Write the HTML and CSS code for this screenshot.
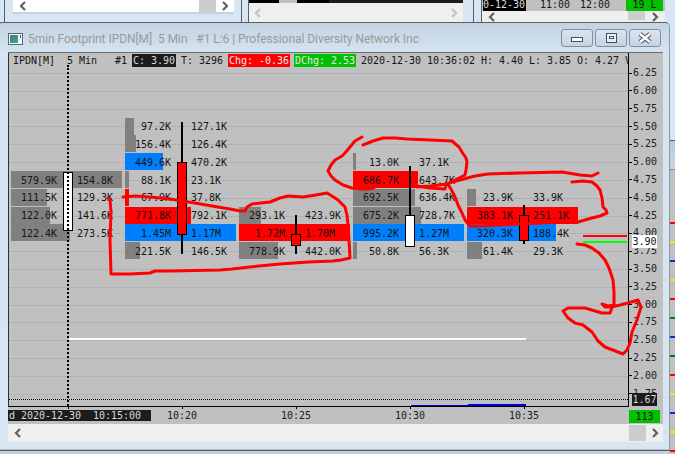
FILE: index.html
```html
<!DOCTYPE html>
<html lang="en">
<head>
<meta charset="utf-8">
<title>5min Footprint IPDN[M]</title>
<link rel="stylesheet" href="styles.css">
</head>
<body>
<div class="desktop">

  <section class="win win-a">
    <div class="hscroll">
      <svg class="chev" viewBox="0 0 10 10"><path d="M7 1 3 5l4 4"/></svg>
      <span class="thumb"></span>
      <svg class="chev" viewBox="0 0 10 10"><path d="M3 1l4 4-4 4"/></svg>
    </div>
  </section>

  <section class="win win-b">
    <div class="clipped-strip"><i class="k1"></i><i class="k2"></i><i class="k3"></i><i class="k4"></i></div>
    <div class="hscroll pale">
      <svg class="chev" viewBox="0 0 10 10"><path d="M7 1 3 5l4 4"/></svg>
      <svg class="chev" viewBox="0 0 10 10"><path d="M3 1l4 4-4 4"/></svg>
    </div>
  </section>

  <section class="win win-c">
    <div class="clock-row">
      <span class="clock-date">0-12-30</span>
      <span class="clock-time">11:00</span>
      <span class="clock-time">12:00</span>
      <span class="clock-count">19 L</span>
    </div>
    <div class="hscroll">
      <svg class="chev" viewBox="0 0 10 10"><path d="M7 1 3 5l4 4"/></svg>
      <span class="thumb"></span>
      <svg class="chev" viewBox="0 0 10 10"><path d="M3 1l4 4-4 4"/></svg>
    </div>
  </section>

  <section class="win win-d">
    <div class="side-title"></div>
    <div class="side-chart">
      <i class="tick-red"></i><i class="tick-yellow"></i><i class="tick-blue"></i><i class="tick-yellow"></i><i class="tick-red"></i><i class="tick-green"></i><i class="tick-blue"></i><i class="tick-green"></i><i class="tick-red"></i><i class="tick-yellow"></i><i class="tick-blue"></i><i class="tick-yellow"></i><i class="tick-red"></i>
    </div>
  </section>

  <div class="win win-e"></div>

  <main class="win win-main">
    <header class="titlebar">
      <svg class="app-icon" viewBox="0 0 15 12">
        <defs><linearGradient id="ig" x1="0" y1="0" x2="1" y2="1"><stop offset="0" stop-color="#3f7f9a"/><stop offset="1" stop-color="#3fa86f"/></linearGradient></defs>
        <rect x=".5" y=".5" width="14" height="11" fill="#f4f6f8" stroke="#5c6670"/>
        <rect x="2" y="2" width="8" height="8" fill="url(#ig)"/>
        <rect x="12" y="2" width="1" height="3" fill="#2050c0"/>
      </svg>
      <span class="title-text">5min Footprint IPDN[M]  5 Min   #1 L:6 | Professional Diversity Network Inc</span>
      <div class="winbtns">
        <button class="winbtn" aria-label="Minimize"><svg viewBox="0 0 30 16"><rect x="9.500" y="7.500" width="11" height="4" fill="#fff" stroke="#44505c"/></svg></button>
        <button class="winbtn" aria-label="Restore"><svg viewBox="0 0 30 16"><rect x="10.500" y="3.500" width="10" height="9" fill="#e8eef4" stroke="#44505c"/><rect x="13.500" y="6.500" width="4" height="2" fill="#fff" stroke="#44505c"/></svg></button>
        <button class="winbtn" aria-label="Close"><svg viewBox="0 0 30 16"><path d="M10 4l10 8M20 4l-10 8" stroke="#44505c" stroke-width="4.600"/><path d="M10 4l10 8M20 4l-10 8" stroke="#fff" stroke-width="2.600"/></svg></button>
      </div>
    </header>

    <div class="chart">
      <div class="plot">
        <div class="grid">
          <i></i><i></i><i></i><i></i><i></i><i></i><i></i><i></i><i></i><i></i><i></i><i></i><i></i><i></i><i></i><i></i><i></i><i></i><i></i>
        </div>

        <div class="fp fp1">
          <div class="row"><b class="bar gray" style="width:111px"></b><span>579.9K</span><span>154.8K</span></div>
          <div class="row"><b class="bar gray" style="width:36px"></b><span>111.5K</span><span>129.3K</span></div>
          <div class="row"><b class="bar gray" style="width:39px"></b><span>122.0K</span><span>141.6K</span></div>
          <div class="row"><b class="bar gray" style="width:59px"></b><span>122.4K</span><span>273.5K</span></div>
        </div>

        <div class="fp fp2">
          <div class="row"><b class="bar gray" style="width:9px"></b><span>97.2K</span><span>127.1K</span></div>
          <div class="row"><b class="bar gray" style="width:11px"></b><span>156.4K</span><span>126.4K</span></div>
          <div class="row"><b class="bar blue" style="width:38px"></b><span>449.6K</span><span>470.2K</span></div>
          <div class="row"><b class="bar gray" style="width:4px"></b><span>88.1K</span><span>23.1K</span></div>
          <div class="row"><b class="bar red" style="width:4px"></b><span>67.9K</span><span>37.8K</span></div>
          <div class="row"><b class="bar red" style="width:66px"></b><span>771.8K</span><span>792.1K</span></div>
          <div class="row"><b class="bar blue" style="width:111px"></b><span>1.45M</span><span>1.17M</span></div>
          <div class="row"><b class="bar gray" style="width:15px"></b><span>221.5K</span><span>146.5K</span></div>
        </div>

        <div class="fp fp3">
          <div class="row"><b class="bar gray" style="width:22px"></b><span>293.1K</span><span>423.9K</span></div>
          <div class="row"><b class="bar red" style="width:111px"></b><span>1.72M</span><span>1.70M</span></div>
          <div class="row"><b class="bar gray" style="width:39px"></b><span>778.9K</span><span>442.0K</span></div>
        </div>

        <div class="fp fp4">
          <div class="row"><b class="bar gray" style="width:3px"></b><span>13.0K</span><span>37.1K</span></div>
          <div class="row"><b class="bar red" style="width:65px"></b><span>686.7K</span><span>643.7K</span></div>
          <div class="row"><b class="bar gray" style="width:62px"></b><span>692.5K</span><span>636.4K</span></div>
          <div class="row"><b class="bar gray" style="width:68px"></b><span>675.2K</span><span>728.7K</span></div>
          <div class="row"><b class="bar blue" style="width:111px"></b><span>995.2K</span><span>1.27M</span></div>
          <div class="row"><b class="bar gray" style="width:4px"></b><span>50.8K</span><span>56.3K</span></div>
        </div>

        <div class="fp fp5">
          <div class="row"><b class="bar gray" style="width:9px"></b><span>23.9K</span><span>33.9K</span></div>
          <div class="row"><b class="bar red" style="width:111px"></b><span>383.1K</span><span>251.1K</span></div>
          <div class="row"><b class="bar blue" style="width:89px"></b><span>320.3K</span><span>188.4K</span></div>
          <div class="row"><b class="bar gray" style="width:15px"></b><span>61.4K</span><span>29.3K</span></div>
        </div>

        <div class="wick w2"></div><div class="wick w3"></div><div class="wick w4"></div><div class="wick w5"></div>
        <div class="body b1 white"></div><div class="body b2 redc"></div><div class="body b3 redc"></div><div class="body b4 white"></div><div class="body b5 redc"></div>
        <div class="cursor"></div>

        <div class="hline white-line"></div>
        <div class="hline last-red"></div>
        <div class="hline last-green"></div>
        <div class="floor-dots"></div>
        <div class="vol vol-thin"></div>
        <div class="vol vol-thick"></div>

        <div class="readout"><span>IPDN[M]  5 Min   #1 </span><span class="r-dark">C: 3.90</span><span> T: 3296 </span><span class="r-red">Chg: -0.36</span><span> </span><span class="r-green">DChg: 2.53</span><span> 2020-12-30 10:36:02 H: 4.40 L: 3.85 O: 4.27 V</span></div>
      </div>

      <div class="axis">
        <div class="price">6.25</div><div class="price">6.00</div><div class="price">5.75</div><div class="price">5.50</div><div class="price">5.25</div><div class="price">5.00</div><div class="price">4.75</div><div class="price">4.50</div><div class="price">4.25</div><div class="price">4.00</div><div class="price">3.75</div><div class="price">3.50</div><div class="price">3.25</div><div class="price">3.00</div><div class="price">2.75</div><div class="price">2.50</div><div class="price">2.25</div><div class="price">2.00</div><div class="price">1.75</div>
        <div class="tag tag-last">3.90</div>
        <div class="tag tag-low">1.67</div>
      </div>

      <div class="timeline">
        <span class="time-start">d 2020-12-30  10:15:00</span>
        <span class="time">10:20</span>
        <span class="time">10:25</span>
        <span class="time">10:30</span>
        <span class="time">10:35</span>
      </div>
      <div class="corner"><span class="count">113</span></div>
    </div>

    <div class="hscroll main-scroll">
      <svg class="chev" viewBox="0 0 10 10"><path d="M7 1 3 5l4 4"/></svg>
      <span class="thumb"></span>
      <svg class="chev" viewBox="0 0 10 10"><path d="M3 1l4 4-4 4"/></svg>
    </div>
  </main>

  <svg class="ink" viewBox="0 0 675 454" aria-hidden="true">
    <path d="M123 197 135 196 150 197 170 199 182 201 195 203 212 206 230 209 240 211 245 211 247 207 252 204 270 202 280 198 288 196 303 197 316 195 327 193 332 196 338 200 345 207 347 215 348 225 349 240 350 258 341 260 333 261 308 262 280 264 250 267 232 269 220 270 170 271 155 271 150 273 130 274 111 274 110 240 111 212 110 200 108 198"/>
    <path d="M362 137 355 141 350 147 345 153 342 156 335 160 331 165 328 171 331 176 335 180 343 185 352 188 360 189 367 189 374 188"/>
    <path d="M363 145 373 141 383 138 395 138 407 139 430 140 452 141 459 147 462 152 466 158 467 162 466 170 465 175 455 180 447 184 430 186 417 187"/>
    <path d="M417 186 430 188 445 189 446 185 452 182 460 180 475 176 488 174 520 173 562 172 580 175 592 176 598 173"/>
    <path d="M572 182 583 181 592 182 597 186 600 190 602 198 603 207 606 210 607 213 600 216 592 218 578 222 560 222 542 223 520 224 498 225 482 226 470 226 465 220 462 213 458 205 455 197 451 189 447 183"/>
    <path d="M577 244 585 245 592 248 599 253 605 260 609 268 613 280 614 292 614 305 608 306 602 304 605 307 611 307 620 305 628 303 638 300 641 307 637 320 632 332 630 343 627 350 623 354 618 352 605 347 598 341 592 332 583 325 575 323 568 318 563 311 568 308 585 308 602 313 610 313 612 308"/>
  </svg>
</div>
</body>
</html>
```

FILE: styles.css
```css
* { box-sizing: border-box; }

html, body { margin: 0; padding: 0; }

body {
  background: #d8e5f2;
  font-family: "DejaVu Sans Mono", monospace;
  font-size: 10px;
  letter-spacing: -0.02px;
  color: #151515;
}

.desktop {
  position: relative;
  width: 675px;
  height: 454px;
  overflow: hidden;
  background: #d8e5f2;
}

.win { position: absolute; }

/* background windows */
.win-a {
  left: 4px; top: -4px; width: 238px; height: 26px;
  padding: 0 8px;
  border-left: 1px solid #5a5f66;
  border-right: 1px solid #5a5f66;
}
.win-a .hscroll { width: 221px; height: 18px; padding-top: 4px; border-bottom: 2px solid #c8d0d8; }
.win-b {
  left: 248px; top: 0; width: 226px; height: 22px;
  border-left: 1px solid #5a5f66;
  border-right: 1px solid #5a5f66;
  padding-right: 10px;
  display: flex; flex-direction: column;
}
.win-c {
  left: 481px; top: 0; width: 194px; height: 22px;
  border-left: 1px solid #5a5f66;
  padding-right: 10px;
  display: flex; flex-direction: column;
}

.clipped-strip { display: flex; height: 3px; background: #c0c0c0; }
.clipped-strip i { display: block; height: 3px; }
.k1 { width: 30px; background: #000; }
.k2 { width: 18px; background: #c0c0c0; }
.k3 { width: 32px; background: #000; }
.k4 { flex: 1; background: #1c1c1c; }

.clock-row {
  display: flex;
  height: 11px;
  line-height: 9px;
  background: #c0c0c0;
  overflow: hidden;
}
.clock-date { width: 43px; margin-left: 1px; background: #000; color: #ddd; white-space: pre; }
.clock-time { width: 30px; margin-left: 14px; }
.clock-time + .clock-time { margin-left: 10px; }
.clock-count {
  width: 37px; margin-left: 16px;
  background: #00c000;
  text-align: center;
}

.win-d {
  left: 670px; top: 140px; width: 5px; height: 314px;
  border-top: 1px solid #5a5f66;
}
.side-title { height: 29px; background: linear-gradient(#b9c9d8, #c8d6e4); border-bottom: 1px solid #808890; }
.side-chart {
  height: 284px;
  padding-top: 52px;
  background: #c0c0c0;
  display: flex; flex-direction: column; gap: 17px;
}
.side-chart i { display: block; height: 2px; width: 5px; }
.tick-red { background: #f00; }
.tick-yellow { background: #ffe600; }
.tick-blue { background: #0030e0; }
.tick-green { background: #008000; }

.win-e {
  left: 0; top: 450px; width: 670px; height: 4px;
  background: #c3d0dc;
  border-top: 1px solid #5a5f66;
}

/* main window */
.win-main {
  left: -2px; top: 22px; width: 672px; height: 428px;
  padding: 0 8px 8px 9px;
  background: linear-gradient(#c3d3e2 0, #d6e4f1 30px, #d8e5f2 100%);
  border: 1px solid #5a5f66;
  border-bottom-color: #b0bcc8;
  border-right-color: #8d99a5;
  border-radius: 4px 5px 0 0;
  display: flex; flex-direction: column;
}

.titlebar {
  height: 29px;
  flex: none;
  display: flex;
  align-items: center;
}
.app-icon { width: 15px; height: 12px; margin: 2px 5px 0 0; flex: none; }
.title-text {
  font-family: "Roboto", sans-serif;
  font-size: 12px;
  letter-spacing: -0.05px;
  color: #9a9a9a;
  white-space: pre;
  margin-top: 2px;
}
.winbtns { margin-left: auto; display: flex; gap: 2px; padding-top: 1px; }
.winbtn {
  width: 32px; height: 18px;
  padding: 0;
  background: linear-gradient(#dbe5ef, #c5d3e1);
  border: 1px solid #7f8ea0;
  border-radius: 3px;
  display: block;
}
.winbtn svg { display: block; width: 30px; height: 16px; }

.chart {
  flex: none;
  width: 655px;
  height: 372px;
  background: #c0c0c0;
  border-top: 1px solid #6a6f75;
  display: grid;
  grid-template-columns: 621px 33px;
  grid-template-rows: 354px 17px;
}

.plot {
  position: relative;
  overflow: hidden;
  border-left: 1px solid #303030;
  border-right: 1px solid #000;
  border-bottom: 1px solid #000;
}

/* price grid */
.grid { display: flex; flex-direction: column; padding-top: 20px; }
.grid i { display: block; height: 17.82px; border-top: 1px dotted #a2a2a2; }

/* footprints: plot origin is page (9,53) */
.fp { position: absolute; width: 111px; }
.fp1 { left: 2px; top: 118px; }
.fp2 { left: 116px; top: 64.54px; }
.fp3 { left: 230px; top: 153.64px; }
.fp4 { left: 344px; top: 100.18px; }
.fp5 { left: 458px; top: 135.82px; }

.row {
  position: relative;
  height: 17.82px;
  line-height: 17.82px;
  display: grid;
  grid-template-columns: 46px 45px;
  column-gap: 20px;
  white-space: pre;
}
.row span { position: relative; top: .6px; }
.row span:first-of-type { text-align: right; }
.bar { position: absolute; left: 0; top: 0; height: 17px; }
.gray { background: #808080; }
.blue { background: #007ffc; }
.red { background: #f00; }

/* candles */
.wick { position: absolute; width: 2px; background: #000; }
.w2 { left: 172px; top: 69px; height: 132px; }
.w3 { left: 286px; top: 162px; height: 39px; }
.w4 { left: 400px; top: 113px; height: 50px; }
.w5 { left: 514px; top: 152px; height: 39px; }

.body { position: absolute; width: 10px; border: 1px solid #000; }
.white { background: #fff; }
.redc { background: #f00; }
.b1 { left: 54px; top: 119px; height: 59px; }
.b2 { left: 168px; top: 109px; height: 73px; }
.b3 { left: 282px; top: 181px; height: 12px; }
.b4 { left: 396px; top: 162px; height: 32px; }
.b5 { left: 510px; top: 162px; height: 26px; }

.cursor {
  position: absolute;
  left: 58px; top: 12px; bottom: 0;
  border-left: 2px dotted #000;
}

.hline { position: absolute; height: 2px; }
.white-line { left: 60px; top: 285px; width: 457px; background: #fff; }
.last-red { left: 574px; top: 182px; width: 44px; background: #f00; }
.last-green { left: 574px; top: 188px; width: 44px; background: #0f0; }
.floor-dots {
  position: absolute;
  left: 0; right: 0; top: 346px;
  border-top: 1px dotted #000;
}
.vol { position: absolute; background: #0000e0; }
.vol-thin { left: 402px; width: 57px; top: 352px; height: 1px; }
.vol-thick { left: 459px; width: 58px; top: 351px; height: 2px; }

/* top readout */
.readout {
  position: absolute;
  left: 4px; top: 1px;
  height: 13px;
  line-height: 13px;
  white-space: pre;
}
.readout span { display: inline-block; height: 13px; vertical-align: top; }
.r-dark { background: #1c1c1c; color: #d8d8d8; padding: 0 1px; margin: 0 -1px; }
.r-red { background: #f00; color: #e8e8e8; padding: 0 1px; margin: 0 -1px; }
.r-green { background: #00c000; color: #e8e8e8; padding: 0 1px; margin: 0 -1px; }

/* price axis */
.axis { position: relative; overflow: hidden; padding-top: 11.09px; }
.price {
  position: relative;
  height: 17.82px;
  line-height: 17.82px;
  padding-left: 4px;
  color: #202020;
}
.price::before {
  content: "";
  position: absolute;
  left: 0; top: 8.5px;
  width: 3px; height: 1px;
  background: #000;
}
.tag { position: absolute; left: 3px; width: 25px; height: 13px; line-height: 13px; text-align: center; }
.tag-last { top: 182px; background: #fff; }
.tag-low { top: 340px; background: #1c1c1c; color: #d8d8d8; }

/* time axis */
.timeline {
  position: relative;
  display: flex;
  align-items: center;
  color: #202020;
  white-space: pre;
}
.time-start {
  width: 143px; height: 11px; line-height: 11px;
  margin-top: -1px;
  padding-left: 1px;
  background: #1c1c1c;
  color: #d8d8d8;
  word-spacing: 0;
  flex: none;
  position: relative;
}
.time-start::before,
.time::before {
  content: "";
  position: absolute;
  top: -4px;
  width: 1px; height: 3px;
  background: #000;
}
.time-start::before { left: 60px; }
.time { position: relative; flex: none; width: 30px; margin-left: 84px; margin-top: -1px; line-height: 11px; }
.time:nth-child(2) { margin-left: 16px; }
.time::before { left: 15px; }

.corner { padding: 3px 0 0 0; }
.count {
  display: block;
  width: 31px; height: 13px;
  line-height: 13px;
  background: #00c000;
  text-align: center;
}

/* scrollbars */
.hscroll {
  display: flex;
  align-items: center;
  justify-content: space-between;
  background: #efefef;
}
.hscroll .chev { width: 10px; height: 10px; flex: none; }
.chev path { fill: none; stroke: #606060; stroke-width: 2.2; }
.pale .chev path { stroke: #c4c4c4; }
.thumb { display: block; width: 17px; background: #cdcdcd; align-self: stretch; }

.win-a .hscroll { padding-left: 5px; padding-right: 4px; padding-top: 4px; background: #fff; }
.win-a .thumb { margin-left: auto; margin-right: 4px; }
.win-b .hscroll { flex: 1; padding: 0 4px; }
.win-c .hscroll { flex: 1; width: 183px; padding: 0 5px; }
.win-c .thumb { margin-left: auto; margin-right: 5px; height: 9px; }

.main-scroll { flex: none; width: 655px; height: 18px; padding: 1px 3px 1px 5px; }
.main-scroll .thumb { margin-left: auto; margin-right: 4px; }

/* hand-drawn annotations */
.ink {
  position: absolute;
  left: 0; top: 0;
  width: 675px; height: 454px;
  pointer-events: none;
}
.ink path {
  fill: none;
  stroke: #f00;
  stroke-width: 3;
  stroke-linejoin: round;
  stroke-linecap: round;
}
```
